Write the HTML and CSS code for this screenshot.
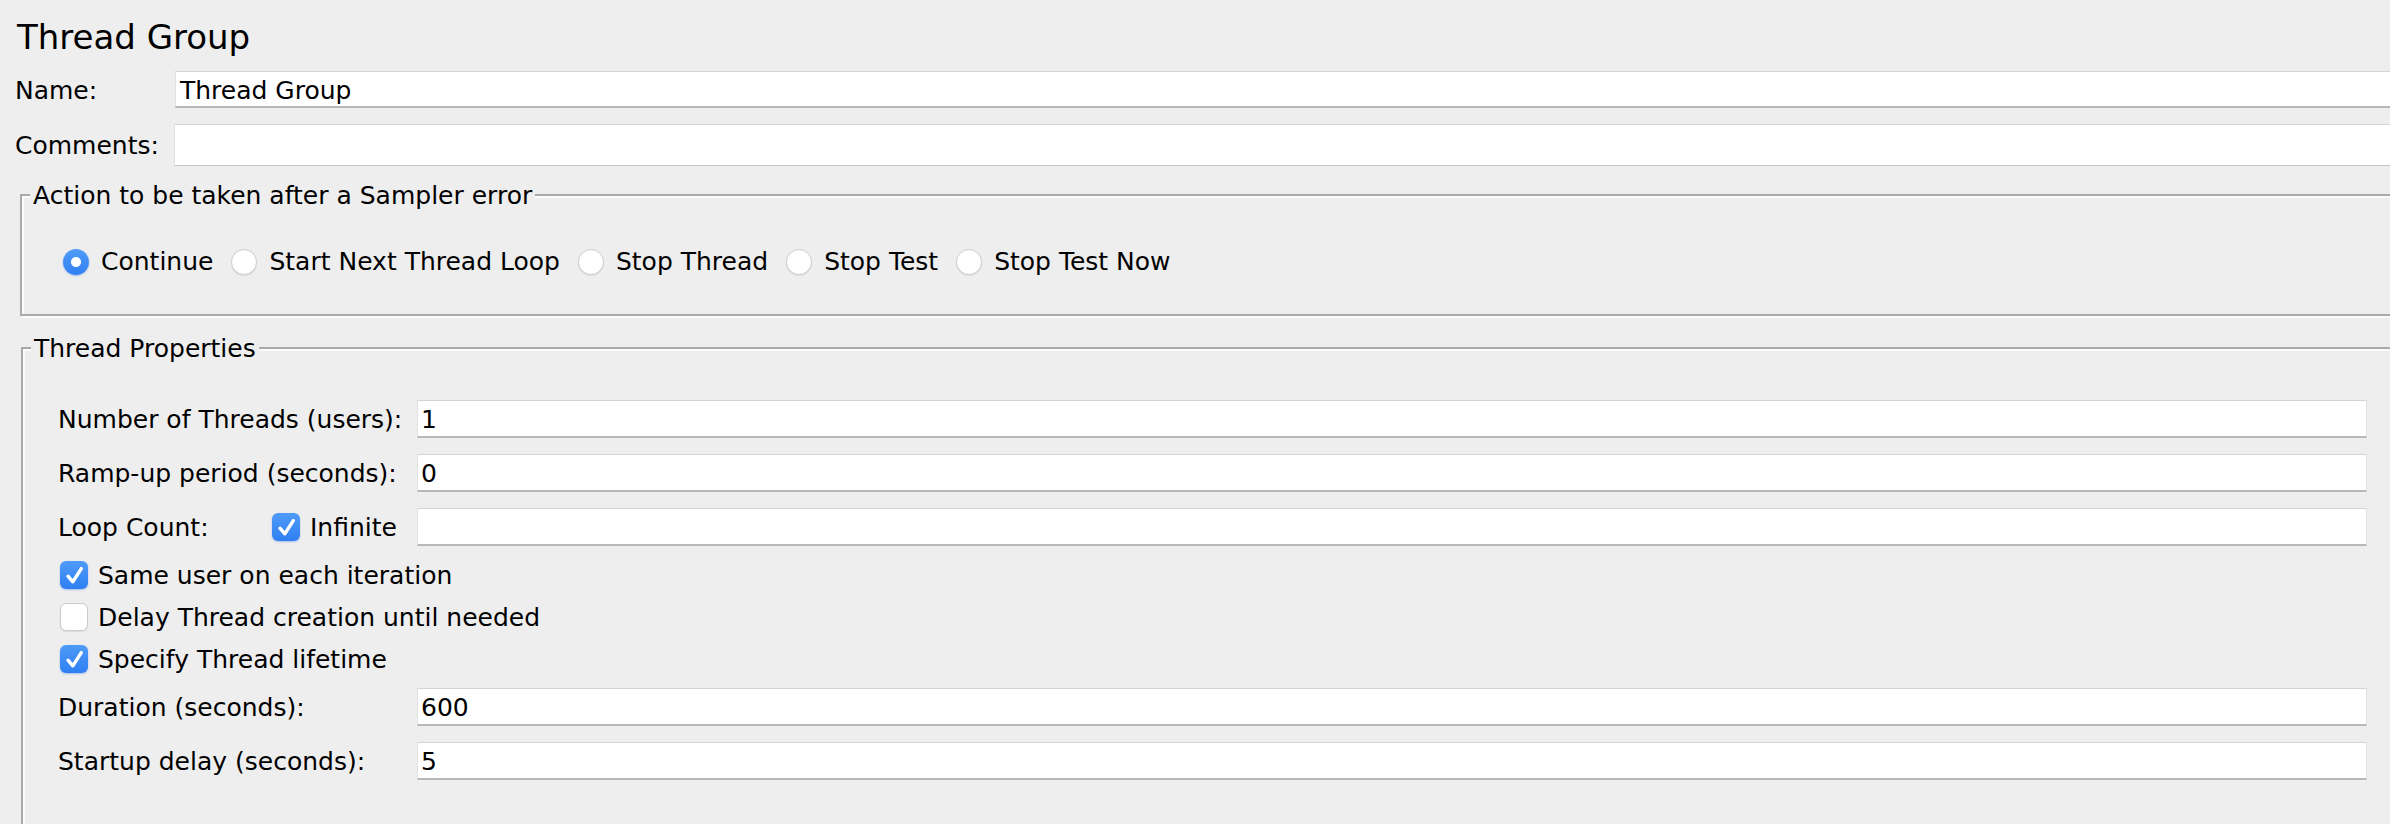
FILE: index.html
```html
<!DOCTYPE html>
<html lang="en">
<head>
<meta charset="utf-8">
<title>Thread Group</title>
<link rel="stylesheet" href="styles.css">
</head>
<body>
<div class="page">
  <h1 class="title">Thread Group</h1>

  <div class="form-row name-row">
    <span class="row-label">Name:</span>
    <div class="field">Thread Group</div>
  </div>
  <div class="form-row comments-row">
    <span class="row-label">Comments:</span>
    <div class="field field-area"></div>
  </div>

  <fieldset class="group action-group">
    <legend>Action to be taken after a Sampler error</legend>
    <div class="radio-row">
      <div class="radio"><span class="radio-dot on"></span><span>Continue</span></div>
      <div class="radio"><span class="radio-dot"></span><span>Start Next Thread Loop</span></div>
      <div class="radio"><span class="radio-dot"></span><span>Stop Thread</span></div>
      <div class="radio"><span class="radio-dot"></span><span>Stop Test</span></div>
      <div class="radio"><span class="radio-dot"></span><span>Stop Test Now</span></div>
    </div>
  </fieldset>

  <fieldset class="group thread-group">
    <legend>Thread Properties</legend>
    <div class="props">
      <div class="prop-fields">
        <div class="prop-row">
          <span class="prop-label">Number of Threads (users):</span>
          <div class="field">1</div>
        </div>
        <div class="prop-row">
          <span class="prop-label">Ramp-up period (seconds):</span>
          <div class="field">0</div>
        </div>
        <div class="prop-row">
          <div class="loop-cell">
            <span class="loop-label">Loop Count:</span>
            <span class="checkbox on"><svg viewBox="0 0 28 28" width="28" height="28"><path d="M8 15.2 L12.8 20.8 L21.3 7.6" fill="none" stroke="#fff" stroke-width="3.4" stroke-linecap="round" stroke-linejoin="round"/></svg></span>
            <span class="check-text">Infinite</span>
          </div>
          <div class="field"></div>
        </div>
      </div>

      <div class="check-list">
        <div class="check-row">
          <span class="checkbox on"><svg viewBox="0 0 28 28" width="28" height="28"><path d="M8 15.2 L12.8 20.8 L21.3 7.6" fill="none" stroke="#fff" stroke-width="3.4" stroke-linecap="round" stroke-linejoin="round"/></svg></span>
          <span class="check-text">Same user on each iteration</span>
        </div>
        <div class="check-row">
          <span class="checkbox"></span>
          <span class="check-text">Delay Thread creation until needed</span>
        </div>
        <div class="check-row">
          <span class="checkbox on"><svg viewBox="0 0 28 28" width="28" height="28"><path d="M8 15.2 L12.8 20.8 L21.3 7.6" fill="none" stroke="#fff" stroke-width="3.4" stroke-linecap="round" stroke-linejoin="round"/></svg></span>
          <span class="check-text">Specify Thread lifetime</span>
        </div>
      </div>

      <div class="prop-fields">
        <div class="prop-row">
          <span class="prop-label">Duration (seconds):</span>
          <div class="field">600</div>
        </div>
        <div class="prop-row">
          <span class="prop-label">Startup delay (seconds):</span>
          <div class="field">5</div>
        </div>
      </div>
    </div>
  </fieldset>
</div>
</body>
</html>
```

FILE: styles.css
```css
html, body {
  margin: 0;
  padding: 0;
  overflow: hidden;
  background: #eeeeee;
}

body {
  font-family: "DejaVu Sans", "Liberation Sans", sans-serif;
  font-size: 25px;
  line-height: 28px;
  color: #000;
}

.page {
  width: calc(100% + 40px);
  padding-top: 18px;
}

.title {
  margin: 0 0 0 17px;
  font-size: 34px;
  line-height: 38px;
  font-weight: normal;
}

/* ---------- text fields ---------- */
.field {
  flex: 1;
  box-sizing: border-box;
  display: flex;
  align-items: center;
  background: #ffffff;
  border: 1px solid #e2e2e2;
  border-top-color: #d4d4d4;
  border-bottom: 2px solid #b8b8b8;
  padding: 2px 0 0 3px;
  white-space: pre;
  min-width: 0;
}

/* ---------- name / comments ---------- */
.form-row {
  display: flex;
  align-items: center;
  margin-left: 15px;
}

.row-label {
  flex: none;
  width: 160px;
  padding-top: 3px;
}

.name-row {
  margin-top: 15px;
  height: 37px;
}

.name-row .field {
  height: 37px;
  padding: 3px 0 0 4px;
}

.comments-row {
  margin-top: 16px;
  height: 42px;
}

.comments-row .row-label {
  width: 159px;
  padding-top: 2px;
}

.field-area {
  height: 42px;
  border-bottom: 1px solid #c4c4c4;
}

/* ---------- titled etched groups ---------- */
.group {
  margin: 0;
  padding: 0;
  min-width: 0;
  border: 2px solid #a9a9a9;
  box-shadow: inset 2px 2px 0 #fbfbfb, 2px 2px 0 #fbfbfb;
}

.group legend {
  margin-left: 8px;
  padding: 2px 3px 0;
  line-height: 28px;
  background: #eeeeee;
}

.action-group {
  margin: 14px 0 0 20px;
}

.thread-group {
  margin: 17px 0 0 21px;
}

/* ---------- radios ---------- */
.radio-row {
  display: flex;
  gap: 17px;
  padding: 38px 0 38px 40px;
}

.radio {
  display: flex;
  align-items: center;
  gap: 11px;
  height: 28px;
  white-space: nowrap;
}

.radio-dot {
  flex: none;
  box-sizing: border-box;
  width: 26px;
  height: 26px;
  margin: 1px;
  border-radius: 50%;
  background: #ffffff;
  border: 1px solid #cdcdcd;
  box-shadow: 0 1px 1px rgba(0, 0, 0, 0.08);
}

.radio-dot.on {
  border: none;
  background:
    radial-gradient(circle, #ffffff 0, #ffffff 4.6px, transparent 5.4px),
    linear-gradient(#519cf8, #2f80f2);
  box-shadow: 0 1px 2px rgba(30, 100, 220, 0.35);
}

/* ---------- thread properties ---------- */
.props {
  display: flex;
  flex-direction: column;
  gap: 8px;
  padding: 37px 61px 60px 35px;
}

.prop-fields {
  display: flex;
  flex-direction: column;
  gap: 16px;
}

.prop-row {
  display: grid;
  grid-template-columns: 359px 1fr;
  align-items: center;
  height: 38px;
}

.prop-row .field {
  height: 38px;
}

.prop-label {
  padding-top: 1px;
  white-space: nowrap;
}

.loop-cell {
  display: flex;
  align-items: center;
}

.loop-label {
  width: 214px;
  flex: none;
  padding-top: 1px;
}

.check-list {
  display: flex;
  flex-direction: column;
}

.check-row {
  display: flex;
  align-items: center;
  height: 42px;
  padding-left: 2px;
}

.checkbox {
  flex: none;
  box-sizing: border-box;
  width: 28px;
  height: 28px;
  border-radius: 6px;
  background: #ffffff;
  border: 1px solid #cbcbcb;
  box-shadow: 0 1px 1px rgba(0, 0, 0, 0.08);
  display: flex;
}

.checkbox.on {
  border: none;
  background: linear-gradient(#4f9bf8, #2e7ff2);
  box-shadow: 0 1px 2px rgba(30, 100, 220, 0.35);
}

.checkbox svg {
  display: block;
}

.check-text {
  margin-left: 10px;
  padding-top: 1px;
  white-space: nowrap;
}
```
